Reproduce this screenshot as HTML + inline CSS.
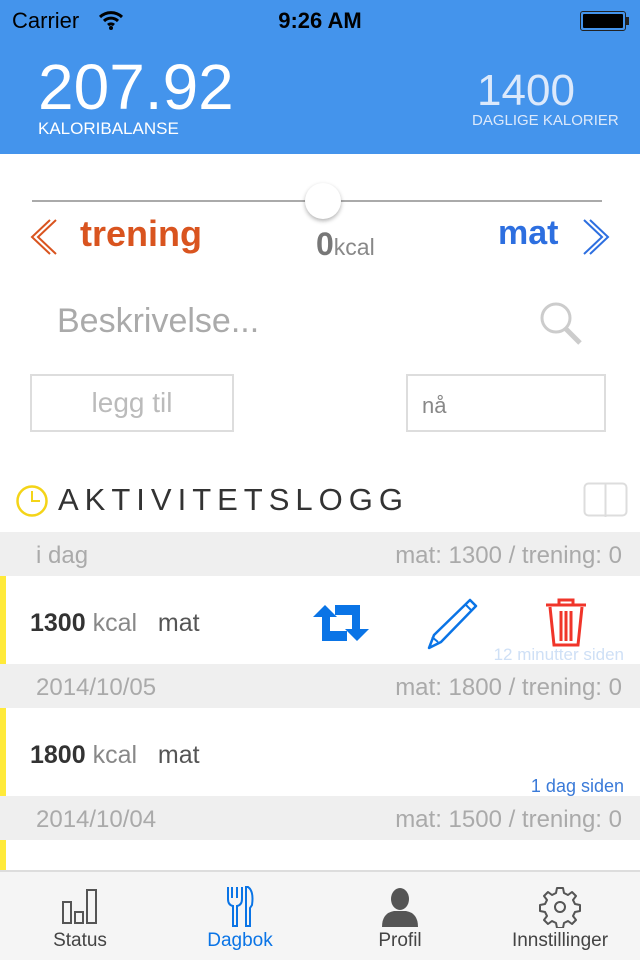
<!DOCTYPE html>
<html><head><meta charset="utf-8"><style>
*{margin:0;padding:0;box-sizing:border-box}
body{width:640px;height:960px;overflow:hidden;font-family:"Liberation Sans",sans-serif;background:#fff;position:relative}
.a{position:absolute}
.hdr{left:0;top:0;width:640px;height:154px;background:#4494ec;color:#fff}
.sec{left:0;width:640px;height:44px;background:#efefef;color:#aaa;font-size:24px}
.sec span{position:absolute;top:10px}
.row{left:0;width:640px;background:#fff}
.bar{left:0;width:6px;background:#ffea3a}
</style></head><body>
<div class="a hdr">
 <div class="a" style="left:12px;top:8px;font-size:22px;color:#000">Carrier</div>
 <svg class="a" style="left:98px;top:10px" width="26" height="20" viewBox="0 0 26 20"><path d="M2 7a16 16 0 0 1 22 0M6 11a10 10 0 0 1 14 0M10 15a4.5 4.5 0 0 1 6 0" stroke="#000" stroke-width="3" fill="none"/><circle cx="13" cy="18" r="2" fill="#000"/></svg>
 <div class="a" style="left:0;width:640px;text-align:center;top:8px;font-size:22px;font-weight:bold;color:#000">9:26 AM</div>
 <div class="a" style="left:580px;top:11px;width:46px;height:20px;border:1px solid #222;border-radius:3px;padding:2px"><div style="background:#000;height:100%;border-radius:1px"></div></div>
 <div class="a" style="left:626px;top:17px;width:3px;height:8px;background:#222"></div>
 <div class="a" style="left:38px;top:54px;font-size:64px;line-height:66px">207.92</div>
 <div class="a" style="left:38px;top:119px;font-size:17px">KALORIBALANSE</div>
 <div class="a" style="left:468px;top:66px;width:116px;text-align:center;font-size:44px;color:#dce9fb">1400</div>
 <div class="a" style="left:472px;top:112px;font-size:15px;color:#dce9fb">DAGLIGE KALORIER</div>
</div>
<div class="a" style="left:32px;top:200px;width:570px;height:2px;background:#aaa"></div>
<div class="a" style="left:305px;top:183px;width:36px;height:36px;border-radius:50%;background:#fff;box-shadow:0 2px 4px rgba(0,0,0,.3)"></div>
<svg class="a" style="left:30px;top:218px" width="30" height="38"><path d="M26 2 8 19l18 17M20 2 2 19l18 17" stroke="#d9541f" stroke-width="2" fill="none"/></svg>
<div class="a" style="left:80px;top:213px;font-size:36px;font-weight:bold;color:#d9541f">trening</div>
<div class="a" style="left:316px;top:226px;font-size:32px;font-weight:bold;color:#777">0<span style="font-size:23px;font-weight:normal;color:#888">kcal</span></div>
<div class="a" style="left:498px;top:214px;font-size:34px;font-weight:bold;color:#2d6fe0">mat</div>
<svg class="a" style="left:580px;top:218px" width="30" height="38"><path d="M4 2l18 17L4 36M10 2l18 17-18 17" stroke="#2d6fe0" stroke-width="2" fill="none"/></svg>
<div class="a" style="left:57px;top:302px;font-size:34px;color:#aaa">Beskrivelse...</div>
<svg class="a" style="left:536px;top:297px" width="50" height="50"><circle cx="20" cy="21" r="14" stroke="#ccc" stroke-width="3" fill="none"/><path d="M30 32l14 14" stroke="#ccc" stroke-width="5"/></svg>
<div class="a" style="left:30px;top:374px;width:204px;height:58px;border:2px solid #ddd;color:#bbb;font-size:28px;text-align:center;line-height:54px">legg til</div>
<div class="a" style="left:406px;top:374px;width:200px;height:58px;border:2px solid #ddd;color:#888;font-size:22px;padding:17px 14px">nå</div>
<svg class="a" style="left:15px;top:484px" width="34" height="34"><circle cx="17" cy="17" r="14.5" stroke="#f4d418" stroke-width="2.5" fill="none"/><path d="M17 7v10h8" stroke="#f4d418" stroke-width="2" fill="none"/></svg>
<div class="a" style="left:58px;top:482px;font-size:31px;letter-spacing:6px;color:#333">AKTIVITETSLOGG</div>
<svg class="a" style="left:583px;top:482px" width="46" height="36"><rect x="1.5" y="1.5" width="42" height="32" rx="4" stroke="#ddd" stroke-width="2" fill="none"/><path d="M22.5 2v33" stroke="#ddd" stroke-width="2"/></svg>
<div class="a sec" style="top:532px"><span style="left:36px">i dag</span><span style="right:18px">mat: 1300 / trening: 0</span></div>
<div class="a row" style="top:576px;height:88px"></div>
<div class="a bar" style="top:576px;height:88px"></div>
<div class="a" style="left:30px;top:609px;font-size:25px;color:#333"><b>1300</b> <span style="color:#888">kcal</span> &nbsp; <span style="color:#555">mat</span></div>
<svg class="a" style="left:313px;top:603px" width="56" height="40" viewBox="0 0 56 40"><path d="M0 14 12 2l12 12h-7v14h17v10H9V14z" fill="#0a74e6"/><path d="M56 26 44 38 32 26h7V12H22V2h25v24z" fill="#0a74e6"/></svg>
<svg class="a" style="left:425px;top:596px" width="56" height="56"><path d="M45 4l6 6-35 36-12 6 5-13z" stroke="#0a74e6" stroke-width="2.5" fill="none" stroke-linejoin="round"/><path d="M41 9l6 6M7 41l6 5" stroke="#0a74e6" stroke-width="2"/></svg>
<svg class="a" style="left:544px;top:596px" width="44" height="54"><path d="M2 9h40M15 9V4h14v5M6 11l4 38h24l4-38M17 15v30M22 15v30M27 15v30" stroke="#f0352a" stroke-width="3" fill="none"/></svg>
<div class="a" style="right:16px;top:645px;font-size:17px;color:#cfe0f6">12 minutter siden</div>
<div class="a sec" style="top:664px"><span style="left:36px">2014/10/05</span><span style="right:18px">mat: 1800 / trening: 0</span></div>
<div class="a row" style="top:708px;height:88px"></div>
<div class="a bar" style="top:708px;height:88px"></div>
<div class="a" style="left:30px;top:741px;font-size:25px;color:#333"><b>1800</b> <span style="color:#888">kcal</span> &nbsp; <span style="color:#555">mat</span></div>
<div class="a" style="right:16px;top:776px;font-size:18px;color:#3a7ad8">1 dag siden</div>
<div class="a sec" style="top:796px"><span style="left:36px">2014/10/04</span><span style="right:18px">mat: 1500 / trening: 0</span></div>
<div class="a bar" style="top:840px;height:30px"></div>
<div class="a" style="left:0;top:870px;width:640px;height:90px;background:#f5f5f5;border-top:2px solid #ddd"></div>
<svg class="a" style="left:60px;top:886px" width="40" height="40"><path d="M3 16h8v21H3zM15 26h8v11h-8zM27 4h9v33h-9z" stroke="#555" stroke-width="2" fill="none"/></svg>
<div class="a" style="left:20px;top:930px;width:120px;text-align:center;font-size:19px;color:#444">Status</div>
<svg class="a" style="left:226px;top:885px" width="28" height="44"><path d="M2 2v12q0 6 5 7v20h4V21q5-1 5-7V2M6 2v11M11 2v11M22 2q6 4 4 18l-2 3v18h-4V2z" stroke="#0a74e6" stroke-width="2" fill="none"/></svg>
<div class="a" style="left:180px;top:930px;width:120px;text-align:center;font-size:19px;color:#0a74e6">Dagbok</div>
<svg class="a" style="left:382px;top:887px" width="36" height="40"><ellipse cx="18" cy="12" rx="9" ry="11" fill="#555"/><path d="M0 40q0-14 12-16h12q12 2 12 16z" fill="#555"/></svg>
<div class="a" style="left:340px;top:930px;width:120px;text-align:center;font-size:19px;color:#444">Profil</div>
<svg class="a" style="left:539px;top:886px" width="42" height="42" viewBox="-21 -21 42 42"><path d="M-3-19h6l1 5 4 2 4-3 4 4-3 4 2 4 5 1v6l-5 1-2 4 3 4-4 4-4-3-4 2-1 5h-6l-1-5-4-2-4 3-4-4 3-4-2-4-5-1v-6l5-1 2-4-3-4 4-4 4 3 4-2z" stroke="#555" stroke-width="2" fill="none" stroke-linejoin="round"/><circle r="5" stroke="#555" stroke-width="2" fill="none"/></svg>
<div class="a" style="left:500px;top:930px;width:120px;text-align:center;font-size:19px;color:#444">Innstillinger</div>
</body></html>
